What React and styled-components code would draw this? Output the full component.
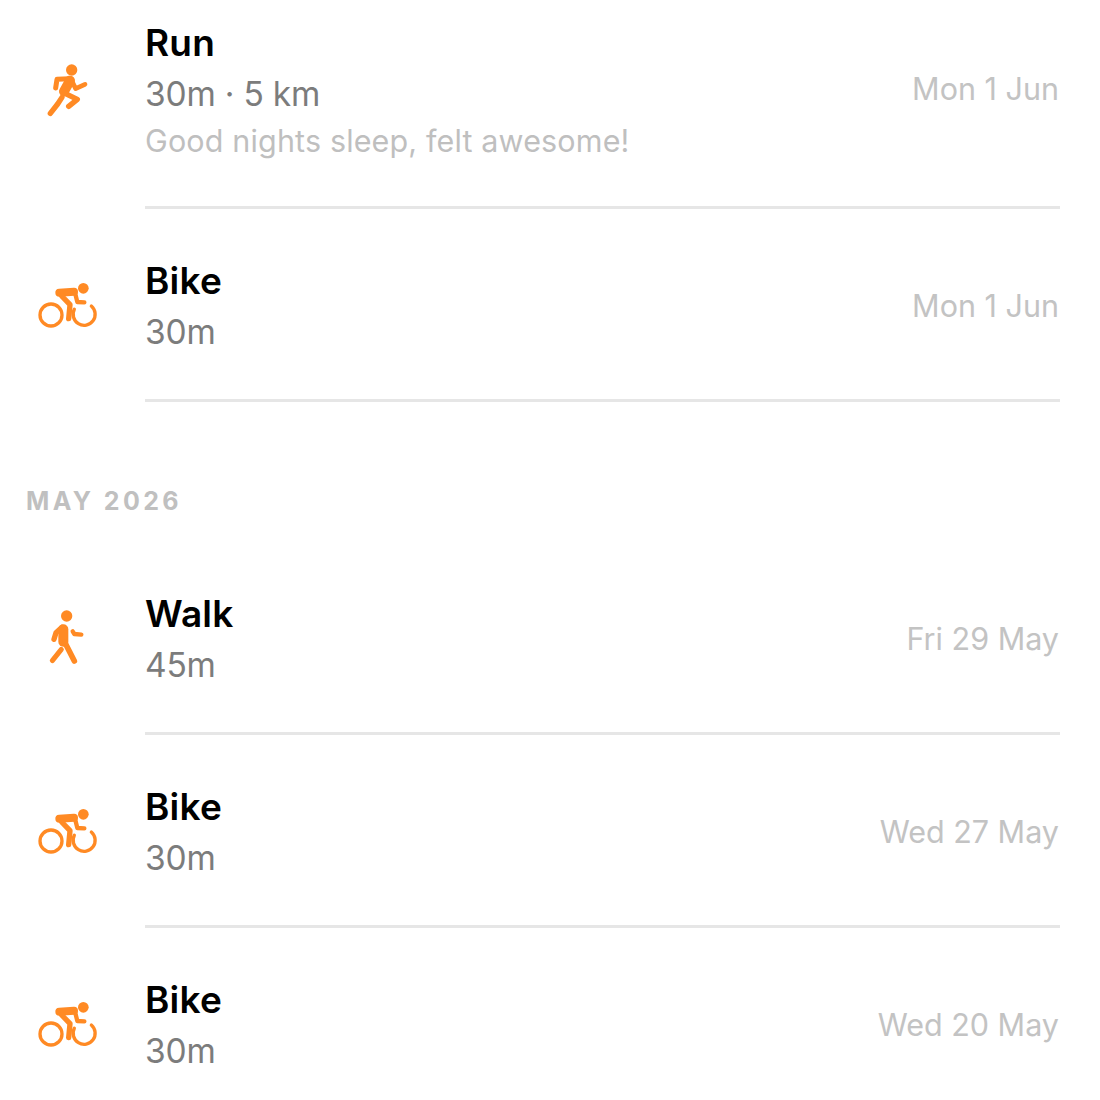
import React from "react";
import styled, { createGlobalStyle } from "styled-components";

const Global = createGlobalStyle`
  html, body { margin: 0; padding: 0; background: #fff; }
  body { font-family: Inter, "Noto Sans", sans-serif; -webkit-font-smoothing: antialiased; }
`;
const Viewport = styled.div`
  height: 1100px;
  overflow: hidden;
`;
const List = styled.main`
  display: flex;
  flex-direction: column;
  margin-top: -29px;
`;
const Row = styled.article`
  display: flex;
`;
const IconSlot = styled.div`
  flex: 0 0 145px;
  display: flex;
  align-items: center;
  justify-content: center;
  box-sizing: border-box;
  padding-right: 5px;
  padding-top: ${(p) => (p.$note ? 0 : 1)}px;
  padding-bottom: ${(p) => (p.$note ? 9 : 0)}px;
  height: ${(p) => (p.$note ? 237 : 190)}px;
`;
const Body = styled.div`
  flex: 1;
  margin-right: 40px;
  display: flex;
  align-items: center;
  justify-content: space-between;
  box-sizing: border-box;
  padding: ${(p) => (p.$note ? "46px 0 45px" : "46px 0 41px")};
  border-bottom: ${(p) => (p.$last ? "0" : "3px solid #e6e6e6")};
`;
const Text = styled.div`
  display: flex;
  flex-direction: column;
`;
const Title = styled.div`
  font-size: 37px;
  font-weight: 600;
  line-height: 52px;
  color: #000;
  letter-spacing: 0.2px;
`;
const Sub = styled.div`
  font-size: 33.5px;
  line-height: 51px;
  color: #7c7c7c;
  letter-spacing: -0.2px;
`;
const Note = styled.div`
  font-size: 30.5px;
  line-height: 41px;
  color: #bfbfbf;
  letter-spacing: 0.15px;
`;
const DateText = styled.div`
  font-size: 30.5px;
  color: #c3c3c3;
  margin-right: 1px;
  margin-bottom: 2px;
`;
const Section = styled.h2`
  margin: 0;
  height: 140px;
  display: flex;
  align-items: flex-end;
  padding: 0 0 26px 26px;
  box-sizing: border-box;
  font-size: 25px;
  font-weight: 700;
  letter-spacing: 3.4px;
  color: #c0c0c0;
  line-height: 30px;
`;

const ORANGE = "#ff8a24";
const IconSvg = styled.svg`
  display: block;
  flex: none;
`;

const RunIcon = () => (
  <IconSvg width="100" height="90" viewBox="0 0 300 270" fill="none" stroke={ORANGE} strokeLinecap="round" strokeLinejoin="round">
    <circle cx="155" cy="90" r="17" fill={ORANGE} stroke="none" />
    <path d="M107 144 L111 118 L150 116" strokeWidth="15" />
    <path d="M150 122 L132 154" strokeWidth="30" />
    <path d="M158 128 L167 146 L195 133" strokeWidth="14" />
    <path d="M126 172 L113 192 L91 220" strokeWidth="16" />
    <path d="M135 160 L172 178 L146 199" strokeWidth="16" />
  </IconSvg>
);
const BikeIcon = () => (
  <IconSvg width="100" height="70" viewBox="0 0 300 210" fill="none" stroke={ORANGE} strokeLinecap="round" strokeLinejoin="round">
    <circle cx="190" cy="55" r="16" fill={ORANGE} stroke="none" />
    <circle cx="93" cy="135" r="33" strokeWidth="10" />
    <path d="M163 118 A33 33 0 1 0 214 108" strokeWidth="10" />
    <path d="M118 68 L162 65" strokeWidth="24" />
    <path d="M165 68 L172 96 L193 97" strokeWidth="13" />
    <path d="M125 78 L150 104 L146 146" strokeWidth="16" />
  </IconSvg>
);
const WalkIcon = () => (
  <IconSvg width="100" height="75" viewBox="0 0 300 225" fill="none" stroke={ORANGE} strokeLinecap="round" strokeLinejoin="round">
    <circle cx="140" cy="48" r="17" fill={ORANGE} stroke="none" />
    <path d="M102 118 L108 98 L126 82" strokeWidth="16" />
    <path d="M130 88 L130 125" strokeWidth="30" />
    <path d="M158 94 L163 102 L184 104" strokeWidth="13" />
    <path d="M124 148 L97 182" strokeWidth="15" />
    <path d="M135 128 L163 183" strokeWidth="17" />
  </IconSvg>
);

const icons = { run: RunIcon, bike: BikeIcon, walk: WalkIcon };

const Entry = ({ kind, title, sub, note, date, last }) => {
  const Icon = icons[kind];
  return (
    <Row>
      <IconSlot $note={!!note}>
        <Icon />
      </IconSlot>
      <Body $note={!!note} $last={last}>
        <Text>
          <Title>{title}</Title>
          <Sub>{sub}</Sub>
          {note && <Note>{note}</Note>}
        </Text>
        <DateText>{date}</DateText>
      </Body>
    </Row>
  );
};

export default function App() {
  return (
    <Viewport>
      <Global />
      <List>
        <Entry kind="run" title="Run" sub="30m · 5 km" note="Good nights sleep, felt awesome!" date="Mon 1 Jun" />
        <Entry kind="bike" title="Bike" sub="30m" date="Mon 1 Jun" />
        <Section>MAY 2026</Section>
        <Entry kind="walk" title="Walk" sub="45m" date="Fri 29 May" />
        <Entry kind="bike" title="Bike" sub="30m" date="Wed 27 May" />
        <Entry kind="bike" title="Bike" sub="30m" date="Wed 20 May" last />
      </List>
    </Viewport>
  );
}
